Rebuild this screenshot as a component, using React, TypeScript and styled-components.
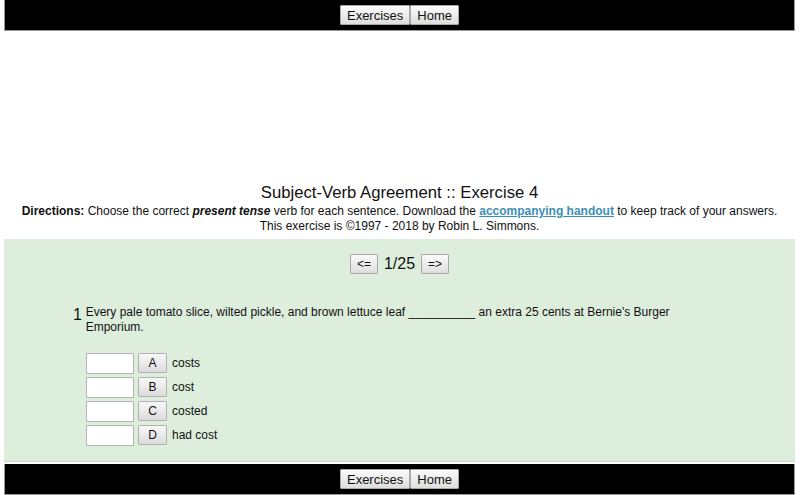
import React from 'react';
import styled, { createGlobalStyle } from 'styled-components';

const GlobalStyle = createGlobalStyle`
   html, body {
      margin: 0;
      padding: 0;
      background: #fff;
      font-family: 'Liberation Sans', Arial, sans-serif;
      color: #111;
   }
`;

const choices = [
   { letter: 'A', text: 'costs' },
   { letter: 'B', text: 'cost' },
   { letter: 'C', text: 'costed' },
   { letter: 'D', text: 'had cost' },
];

const NavBar: React.FC = () => (
   <Bar>
      <BarButton>Exercises</BarButton>
      <BarButton>Home</BarButton>
   </Bar>
);

const App: React.FC = () => {
   return (
      <Page>
         <GlobalStyle />
         <NavBar />
         <AdSpace />
         <Header>
            <Title>Subject-Verb Agreement :: Exercise 4</Title>
            <Line>
               <b>Directions:</b> Choose the correct{' '}
               <b>
                  <i>present tense</i>
               </b>{' '}
               verb for each sentence. Download the{' '}
               <HandoutLink href="#">accompanying handout</HandoutLink> to keep
               track of your answers.
            </Line>
            <Line>This exercise is ©1997 - 2018 by Robin L. Simmons.</Line>
         </Header>
         <Exercise>
            <Pager>
               <SmallButton>&lt;=</SmallButton>
               <Counter>1/25</Counter>
               <SmallButton>=&gt;</SmallButton>
            </Pager>
            <Question>
               <Number>1</Number>
               <Sentence>
                  Every pale tomato slice, wilted pickle, and brown lettuce leaf
                  __________ an extra 25 cents at Bernie's Burger Emporium.
               </Sentence>
            </Question>
            <Choices>
               {choices.map(c => (
                  <ChoiceRow key={c.letter}>
                     <AnswerBox />
                     <LetterButton>{c.letter}</LetterButton>
                     <ChoiceText>{c.text}</ChoiceText>
                  </ChoiceRow>
               ))}
            </Choices>
         </Exercise>
         <NavBar />
      </Page>
   );
};

export default App;

const Page = styled.div`
   padding: 0 5px 0 4px;
   width: 800px;
   box-sizing: border-box;
`;

const Bar = styled.div`
   background: #000;
   height: 31px;
   border: 1px solid #9a9a9a;
   border-top: none;
   box-sizing: border-box;
   display: flex;
   justify-content: center;
   align-items: center;
`;

const BarButton = styled.button`
   font-family: 'Liberation Sans', Arial, sans-serif;
   font-size: 13px;
   color: #111;
   height: 20px;
   padding: 0 6px;
   margin: 0;
   border: 1px solid #a8a8a8;
   border-radius: 1px;
   background: linear-gradient(#fbfbfb, #dedede);
   cursor: pointer;
`;

const AdSpace = styled.div`
   height: 152px;
`;

const Header = styled.div`
   text-align: center;
   padding-bottom: 5px;
`;

const Title = styled.h1`
   font-size: 16.7px;
   font-weight: normal;
   margin: 0 0 1px;
   line-height: 20px;
`;

const Line = styled.p`
   font-size: 12px;
   margin: 0;
   line-height: 15px;
`;

const HandoutLink = styled.a`
   color: #3b8fb4;
   font-weight: bold;
   text-decoration: underline;
`;

const Exercise = styled.div`
   background: #deeedc;
   border-bottom: 1px solid #c8d8c6;
   padding: 15px 0 16px;
   margin-bottom: 2px;
`;

const Pager = styled.div`
   display: flex;
   justify-content: center;
   align-items: center;
   gap: 6px;
`;

const SmallButton = styled.button`
   font-family: 'Liberation Sans', Arial, sans-serif;
   font-size: 12px;
   color: #111;
   width: 28px;
   height: 20px;
   padding: 0;
   box-sizing: border-box;
   border: 1px solid #a8a8a8;
   border-radius: 1px;
   background: linear-gradient(#fbfbfb, #dedede);
`;

const Counter = styled.span`
   font-size: 16px;
`;

const Question = styled.div`
   display: flex;
   align-items: flex-start;
   margin: 31px 0 0 69px;
   width: 640px;
`;

const Number = styled.span`
   font-size: 16px;
   width: 13px;
   line-height: 18px;
   margin-top: 1px;
`;

const Sentence = styled.p`
   margin: 0;
   font-size: 12px;
   line-height: 15px;
`;

const Choices = styled.div`
   display: flex;
   flex-direction: column;
   gap: 4px;
   margin: 18px 0 0 82px;
`;

const ChoiceRow = styled.div`
   display: flex;
   align-items: center;
   height: 20px;
`;

const AnswerBox = styled.div`
   width: 46px;
   height: 19px;
   background: #fff;
   border: 1px solid #b5b5b5;
`;

const LetterButton = styled.button`
   font-family: 'Liberation Sans', Arial, sans-serif;
   font-size: 12px;
   color: #111;
   width: 29px;
   height: 20px;
   padding: 0;
   margin-left: 4px;
   border: 1px solid #b0b0b0;
   border-radius: 1px;
   background: linear-gradient(#f8f8f8, #dcdcdc);
`;

const ChoiceText = styled.span`
   font-size: 12px;
   margin-left: 5px;
`;
